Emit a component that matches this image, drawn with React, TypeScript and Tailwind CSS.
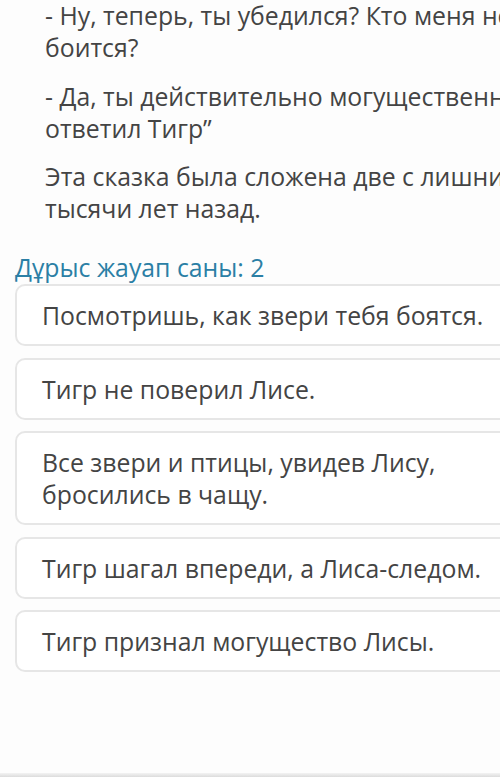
const story = [
  ["- Ну, теперь, ты убедился? Кто меня не", "боится?"],
  ["- Да, ты действительно могущественна,", "ответил Тигр”"],
  ["Эта сказка была сложена две с лишним", "тысячи лет назад."],
];

const answers = [
  ["Посмотришь, как звери тебя боятся."],
  ["Тигр не поверил Лисе."],
  ["Все звери и птицы, увидев Лису,", "бросились в чащу."],
  ["Тигр шагал впереди, а Лиса-следом."],
  ["Тигр признал могущество Лисы."],
];

export default function App() {
  return (
    <div
      className="relative h-[777px] w-[500px] overflow-hidden bg-[#fdfdfd] text-[24.8px] leading-[32px] text-[#444444]"
      style={{ fontFamily: '"Open Sans", "Noto Sans", sans-serif' }}
    >
      {/* story text */}
      <div className="-mt-px flex flex-col gap-[16.5px] pl-[45px]">
        {story.map((p, i) => (
          <p key={i} className="whitespace-nowrap">
            {p.map((line, j) => (
              <span key={j} className="block">
                {line}
              </span>
            ))}
          </p>
        ))}
      </div>

      <div className="mt-[27px] pl-[15px] whitespace-nowrap text-[#2b7fa5]">
        Дұрыс жауап саны: 2
      </div>

      {/* answer options */}
      <div className="mt-px flex w-[560px] flex-col gap-[11.5px] pl-[15px]">
        {answers.map((a, i) => (
          <div
            key={i}
            className="rounded-[10px] border-2 border-[#e6e6e6] bg-white py-[13px] pl-[25px] whitespace-nowrap"
          >
            {a.map((line, j) => (
              <span key={j} className="block">
                {line}
              </span>
            ))}
          </div>
        ))}
      </div>

      <div className="absolute bottom-0 left-0 h-[4px] w-full bg-gradient-to-b from-[#f3f3f3] to-[#dcdcdc]" />
    </div>
  );
}
